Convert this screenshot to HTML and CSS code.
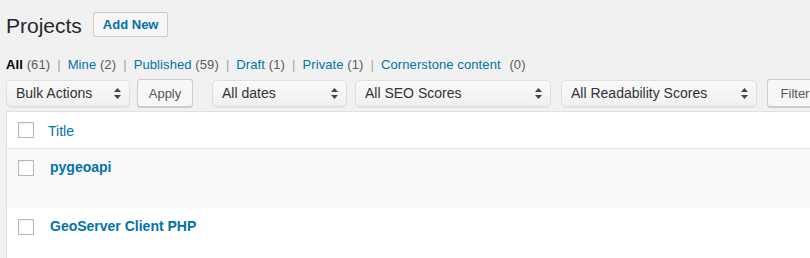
FILE: index.html
```html
<!DOCTYPE html>
<html lang="en">
<head>
    <meta charset="UTF-8">
    <meta name="viewport" content="width=device-width, initial-scale=1.0">
    <title>Projects</title>
    <link rel="stylesheet" href="styles.css">
</head>
<body>
    <div class="wrap">
        <div class="page-header">
            <h1 class="page-title">Projects</h1>
            <a class="add-new" href="#">Add New</a>
        </div>

        <ul class="subsubsub">
            <li><a class="current" href="#">All <span class="count">(61)</span></a></li>
            <li class="sep">|</li>
            <li><a href="#">Mine <span class="count">(2)</span></a></li>
            <li class="sep">|</li>
            <li><a href="#">Published <span class="count">(59)</span></a></li>
            <li class="sep">|</li>
            <li><a href="#">Draft <span class="count">(1)</span></a></li>
            <li class="sep">|</li>
            <li><a href="#">Private <span class="count">(1)</span></a></li>
            <li class="sep">|</li>
            <li><a href="#">Cornerstone content</a> <span class="count gap">(0)</span></li>
        </ul>

        <div class="tablenav">
            <div class="select bulk">
                <span>Bulk Actions</span>
                <svg class="arrows" width="7" height="11" viewBox="0 0 7 11"><path d="M3.5 0 L7 4 H0 Z M0 7 H7 L3.5 11 Z" fill="#444"/></svg>
            </div>
            <button class="button apply">Apply</button>
            <div class="select dates">
                <span>All dates</span>
                <svg class="arrows" width="7" height="11" viewBox="0 0 7 11"><path d="M3.5 0 L7 4 H0 Z M0 7 H7 L3.5 11 Z" fill="#444"/></svg>
            </div>
            <div class="select seo">
                <span>All SEO Scores</span>
                <svg class="arrows" width="7" height="11" viewBox="0 0 7 11"><path d="M3.5 0 L7 4 H0 Z M0 7 H7 L3.5 11 Z" fill="#444"/></svg>
            </div>
            <div class="select readability">
                <span>All Readability Scores</span>
                <svg class="arrows" width="7" height="11" viewBox="0 0 7 11"><path d="M3.5 0 L7 4 H0 Z M0 7 H7 L3.5 11 Z" fill="#444"/></svg>
            </div>
            <button class="button filter">Filter</button>
        </div>

        <table class="list-table">
            <thead>
                <tr>
                    <th class="check-column"><span class="checkbox"></span></th>
                    <th class="column-title"><a href="#">Title</a></th>
                </tr>
            </thead>
            <tbody>
                <tr class="alternate">
                    <td class="check-column"><span class="checkbox"></span></td>
                    <td class="column-title"><a class="row-title" href="#">pygeoapi</a></td>
                </tr>
                <tr>
                    <td class="check-column"><span class="checkbox"></span></td>
                    <td class="column-title"><a class="row-title" href="#">GeoServer Client PHP</a></td>
                </tr>
            </tbody>
        </table>
    </div>
</body>
</html>
```

FILE: styles.css
```css
html, body {
    margin: 0;
    padding: 0;
}

body {
    background: #f1f1f1;
    color: #444;
    font-family: "Liberation Sans", Arial, sans-serif;
    font-size: 13px;
    overflow: hidden;
}

a {
    color: #0073aa;
    text-decoration: none;
}

.wrap {
    padding: 12px 0 0 6px;
    width: 920px;
}

.page-header {
    display: flex;
    align-items: center;
    height: 25px;
}

.page-title {
    margin: 0 11px 0 0;
    font-size: 21px;
    font-weight: normal;
    color: #23282d;
    line-height: 25px;
    position: relative;
    top: 1px;
}

.add-new {
    display: inline-block;
    box-sizing: border-box;
    height: 25px;
    line-height: 23px;
    padding: 0 9px;
    border: 1px solid #ccc;
    border-radius: 2px;
    background: #f7f7f7;
    font-weight: bold;
    font-size: 13px;
}

.subsubsub {
    list-style: none;
    display: flex;
    margin: 19px 0 0;
    padding: 0;
    height: 17px;
    line-height: 17px;
    color: #666;
    letter-spacing: 0.1px;
}

.subsubsub li {
    white-space: pre;
}

.subsubsub .sep {
    color: #a0a5aa;
    margin: 0 7px;
}

.subsubsub .current {
    color: #000;
    font-weight: bold;
}

.subsubsub .count {
    color: #555d66;
    font-weight: normal;
}

.subsubsub .gap {
    margin-left: 5px;
}

.tablenav {
    display: flex;
    align-items: center;
    margin-top: 6px;
    height: 28px;
}

.select {
    box-sizing: border-box;
    height: 27px;
    display: flex;
    align-items: center;
    justify-content: space-between;
    padding: 0 8px 0 9px;
    border: 1px solid #dedede;
    border-radius: 5px;
    background: linear-gradient(#fafafa, #f0f0f0);
    box-shadow: 0 1px 1px rgba(0, 0, 0, 0.06);
    color: #333;
    font-size: 14px;
}

.select .arrows {
    flex: none;
}

.bulk {
    width: 124px;
}

.dates {
    width: 135px;
    margin-left: 19px;
}

.seo {
    width: 196px;
    margin-left: 8px;
}

.readability {
    width: 196px;
    margin-left: 10px;
}

.button {
    box-sizing: border-box;
    height: 28px;
    padding: 0 10px;
    border: 1px solid #ccc;
    border-radius: 3px;
    background: #f7f7f7;
    box-shadow: 0 1px 0 #ccc;
    color: #555;
    font-family: "Liberation Sans", Arial, sans-serif;
    font-size: 13px;
}

.apply {
    width: 56px;
    margin-left: 7px;
}

.filter {
    width: 56px;
    margin-left: 10px;
}

.list-table {
    margin-top: 4px;
    width: 900px;
    border-collapse: collapse;
    background: #fff;
    border: 1px solid #e1e1e1;
    box-shadow: 0 1px 1px rgba(0, 0, 0, 0.04);
}

.list-table th,
.list-table td {
    text-align: left;
    vertical-align: top;
    padding: 0;
    font-weight: normal;
}

.list-table thead tr {
    height: 37px;
    border-bottom: 1px solid #e1e1e1;
}

.list-table thead th {
    vertical-align: middle;
}

.list-table tbody tr {
    height: 59px;
}

.list-table .alternate {
    background: #f9f9f9;
}

.check-column {
    width: 42px;
}

.checkbox {
    display: block;
    box-sizing: border-box;
    width: 16px;
    height: 16px;
    margin-left: 11px;
    border: 1px solid #b4b9be;
    background: #fff;
    box-shadow: inset 0 1px 2px rgba(0, 0, 0, 0.07);
}

tbody .checkbox {
    margin-top: 11px;
}

.column-title a {
    font-size: 14px;
}

thead .column-title a {
    position: relative;
    left: -1px;
    top: 1px;
}

tbody .column-title {
    padding-top: 10px;
}

.row-title {
    display: inline-block;
    margin-left: 1px;
    font-weight: bold;
}
```
